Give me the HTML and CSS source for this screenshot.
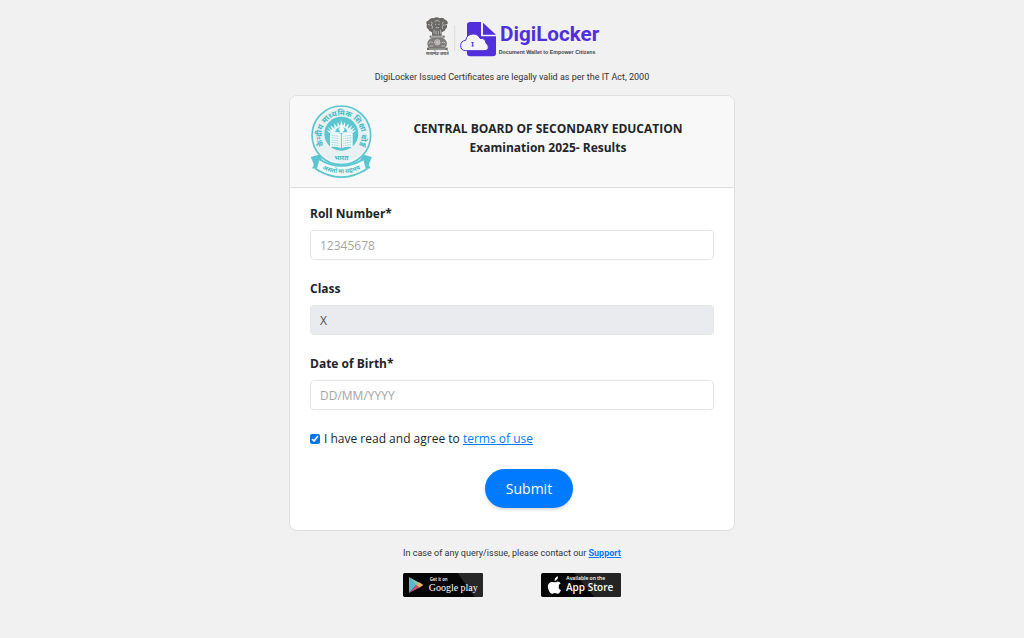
FILE: index.html
```html
<!DOCTYPE html>
<html lang="en">
<head>
<meta charset="utf-8">
<meta name="viewport" content="width=device-width, initial-scale=1">
<title>DigiLocker - CBSE Examination 2025 Results</title>
<link rel="stylesheet" href="styles.css">
</head>
<body>
<div class="page">
  <header class="brand">
    <svg class="brand-logo" viewBox="27 15 528 126" role="img" aria-label="DigiLocker">
      <!-- State emblem -->
      <g fill="#6b6966">
        <path d="M42 30q6-9 14-5q9-6 18 0q10-5 16 4q9 2 8 12l-3 3q4 8-3 13q-3 9-12 10v10h-29v-10q-9-1-11-9q-8-5-4-14q-7-8 6-14z"/>
        <path d="M44 77h45v6H44z"/>
        <path d="M51 83q-15 6-14 20q0 8 7 12h45q7-5 7-14q-1-12-13-18z" opacity=".85"/>
        <path d="M36 113h62v7H36z"/>
      </g>
      <g fill="none" stroke="#dedddb" stroke-width="2">
        <path d="M49 35q5 5 0 10q6 5 2 12M85 35q-5 5 0 10q-6 5-2 12M59 34q7-5 15 0M60 43h4m6 0h4M62 52q5 4 10 0M57 59v12M63 62v11M70 62v11M77 59v12M39 43l7 3M96 43l-8 3M48 80h37"/>
        <circle cx="67" cy="97" r="8"/>
        <path d="M67 89v16M59 97h16M61 91l12 12M73 91l-12 12M41 100q6-8 13-2M80 99q6-7 12 1M44 108h11M79 108h11M42 117h50"/>
      </g>
      <text class="motto" x="67" y="135" text-anchor="middle">सत्यमेव जयते</text>
      <path d="M119 45v79" stroke="#d2d2d2" stroke-width="2"/>
      <!-- Document and cloud -->
      <path fill="#5130db" d="M165 36h33v43h45v51q0 9-9 9h-69q-9 0-9-9V45q0-9 9-9z"/>
      <path fill="#5130db" d="M204 38l39 36h-39z"/>
      <path d="M152 122q-15 0-15-15q0-14 15-16q4-19 22-19q15 0 21 13q17-1 18 15q7 3 7 11q0 11-13 11z" fill="#f5f4fb" stroke="#5130db" stroke-width="3"/>
      <path d="M169 98h7M173 97v11M170 108h6" fill="none" stroke="#5130db" stroke-width="3"/>
      <text class="wordmark" x="255" y="94">DigiLocker</text>
      <text class="tagline" x="251" y="132">Document Wallet to Empower Citizens</text>
    </svg>
    <p class="note">DigiLocker Issued Certificates are legally valid as per the IT Act, 2000</p>
  </header>

  <main class="card">
    <div class="card-header">
      <svg class="seal" viewBox="30 22 186 219" role="img" aria-label="Central Board of Secondary Education seal">
        <defs>
          <path id="arc-top" d="M73 145A60 60 0 1 1 175 145"/>
          <path id="arc-bottom" d="M55 208Q124 246 193 208"/>
        </defs>
        <path fill="#5bc6d0" d="M32 178l25-7l20 29l-22 24l-5-10l-14-2q6-7 5-14zM216 178l-25-7l-20 29l22 24l5-10l14-2q-6-7-5-14z"/>
        <circle cx="124" cy="113" r="88" fill="#e9f0f2" stroke="#5bc6d0" stroke-width="5"/>
        <circle cx="124" cy="113" r="82" fill="none" stroke="#f8f8f8" stroke-width="3"/>
        <circle cx="124" cy="108" r="51" fill="#5bc6d0"/>
        <path fill="#e8f8fa" d="M88 105l-8-8l12 4l-9-13l14 9l-6-15l13 11l-2-16l10 12l1-17l7 14l4-18l4 18l7-14l1 17l10-12l-2 16l13-11l-6 15l14-9l-9 13l12-4l-8 8z"/>
        <path fill="#5bc6d0" d="M106 103q1-14 18-14t18 14z"/>
        <path fill="#fff" d="M115 94q5-1 6-5q2-8 7-9q-2 6 1 9q2 4 5 5q-2 8-9 8t-10-8zM121 101h7v6h-7z"/>
        <path fill="#f3fafa" d="M90 106q17-5 33 3v42q-16-6-33-3zM158 106q-17-5-33 3v42q16-6 33-3z"/>
        <path d="M95 113l23 3M95 120l23 3M95 127l23 3M95 134l23 3M95 141l23 3M153 113l-23 3M153 120l-23 3M153 127l-23 3M153 134l-23 3M153 141l-23 3" stroke="#9bd6dc" stroke-width="3" stroke-dasharray="5 2"/>
        <path d="M124 108v44" stroke="#5bc6d0" stroke-width="2"/>
        <circle cx="53" cy="140" r="3" fill="#5bc6d0"/>
        <circle cx="195" cy="140" r="3" fill="#5bc6d0"/>
        <text class="seal-ring"><textPath href="#arc-top" startOffset="50%" text-anchor="middle">केन्द्रीय माध्यमिक शिक्षा बोर्ड</textPath></text>
        <text class="seal-country" x="124" y="187" text-anchor="middle">भारत</text>
        <path fill="#f1fafa" stroke="#5bc6d0" stroke-width="5" d="M56 184q68 42 136 0l8 30q-76 49-152 0z"/>
        <text class="seal-motto"><textPath href="#arc-bottom" startOffset="50%" text-anchor="middle">असतो मा सद्गमय</textPath></text>
      </svg>
      <h1 class="title">CENTRAL BOARD OF SECONDARY EDUCATION<br>Examination 2025- Results</h1>
    </div>
    <form class="form">
      <div class="field">
        <label for="roll">Roll Number*</label>
        <input id="roll" class="control" type="text" placeholder="12345678">
      </div>
      <div class="field">
        <label for="class">Class</label>
        <input id="class" class="control" type="text" value="X" readonly>
      </div>
      <div class="field">
        <label for="dob">Date of Birth*</label>
        <input id="dob" class="control" type="text" placeholder="DD/MM/YYYY">
      </div>
      <div class="agree">
        <input id="agree" class="tick" type="checkbox" checked>
        <label for="agree">I have read and agree to <a href="#terms">terms of use</a></label>
      </div>
      <div class="actions"><button class="submit" type="submit">Submit</button></div>
    </form>
  </main>

  <footer class="footer">
    <p class="note">In case of any query/issue, please contact our <a class="support" href="#support">Support</a></p>
    <div class="stores">
      <a class="store" href="#google-play" aria-label="Get it on Google play">
        <svg viewBox="0 0 240 72">
          <rect width="240" height="72" rx="5" fill="#050505"/>
          <path d="M164 0h71q5 0 5 5v62q0 5-5 5h-20z" fill="#272727"/>
          <path d="M18 12l22 24l-22 24z" fill="#54b9d1"/>
          <path d="M18 12l31 17l-9 9z" fill="#8ac5b3"/>
          <path d="M49 28l12 8l-12 8l-9-8z" fill="#edb466"/>
          <path d="M18 60l31-16l-9-8z" fill="#d34e69"/>
          <text class="store-small" x="80" y="24">Get it on</text>
          <text class="google" x="77" y="53">Google play</text>
        </svg>
      </a>
      <a class="store" href="#app-store" aria-label="Available on the App Store">
        <svg viewBox="0 0 240 72">
          <rect width="240" height="72" rx="5" fill="#050505"/>
          <path d="M100 0h135q5 0 5 5v62q0 5-5 5h-75z" fill="#242424"/>
          <path fill="#fff" d="M41 24q-1-10 10-14q1 10-10 14zM40 28q4 0 8-2q7-1 11 5q-7 4-6 11q0 7 7 10q-5 12-11 10q-8-4-14 0q-7 2-12-11q-5-12 0-19q5-8 17-4z"/>
          <text class="store-small available" x="76" y="21">Available on the</text>
          <text class="apple" x="75" y="55">App Store</text>
        </svg>
      </a>
    </div>
  </footer>
</div>
</body>
</html>
```
FILE: styles.css
```css
* { box-sizing: border-box; }

body {
  margin: 0;
  background: #f1f1f1;
  color: #212529;
  font-family: "Open Sans", "Noto Sans", sans-serif;
  font-size: 12px;
  line-height: 20px;
}

p, h1 { margin: 0; }

a { color: #007bff; }

.page {
  display: flex;
  flex-direction: column;
  align-items: center;
  padding: 15px 16px 40px;
}

.brand {
  display: flex;
  flex-direction: column;
  align-items: center;
  gap: 14px;
}

.brand-logo { width: 176px; height: 42px; }

.wordmark {
  fill: #5130db;
  font: bold 62px Roboto, sans-serif;
}

.tagline { fill: #444; font: bold 16px "Liberation Sans", sans-serif; }

.motto { fill: #555; font: bold 13px "Noto Sans Devanagari", "Noto Sans", sans-serif; }

.note {
  color: #333;
  font-family: Roboto, "Noto Sans", sans-serif;
  font-size: 9px;
  line-height: 12px;
}

.card {
  width: 100%;
  max-width: 446px;
  margin-top: 12px;
  background: #fff;
  border: 1px solid #dfdfdf;
  border-radius: 8px;
  overflow: hidden;
}

.card-header {
  display: flex;
  align-items: flex-start;
  gap: 10px;
  padding: 9px 20px;
  background: #f8f8f8;
  border-bottom: 1px solid #dfdfdf;
}

.seal { flex: none; width: 62px; height: 73px; }

.seal-ring { fill: #42bbc6; font: bold 23px "Noto Sans Devanagari", "Noto Sans", sans-serif; }
.seal-country { fill: #42bbc6; font: bold 20px "Noto Sans Devanagari", "Noto Sans", sans-serif; }
.seal-motto { fill: #42bbc6; font: bold 18px "Noto Sans Devanagari", "Noto Sans", sans-serif; }

.title {
  flex: 1;
  padding-top: 14px;
  font-size: 12px;
  line-height: 19px;
  font-weight: 700;
  text-align: center;
}

.form { padding: 16px 20px 22px; }

.field {
  display: flex;
  flex-direction: column;
  gap: 6px;
  margin-bottom: 19px;
}

.field label { font-weight: 700; }

.control {
  width: 100%;
  height: 30px;
  padding: 0 9px;
  border: 1px solid #e4e6e8;
  border-radius: 4px;
  background: #fff;
  color: #495057;
  font: inherit;
}

.control::placeholder { color: #a5a5a5; opacity: 1; }
.control:read-only { background: #e9ebef; }

.agree { display: flex; align-items: center; gap: 4px; }

.tick { width: 10px; height: 10px; margin: 0; accent-color: #0075e8; }

.actions {
  display: flex;
  justify-content: center;
  margin-top: 20px;
  padding-left: 34px;
}

.submit {
  height: 39px;
  padding: 0 21px;
  border: 0;
  border-radius: 20px;
  background: #007bff;
  box-shadow: 0 2px 3px #00000026;
  color: #fff;
  font: inherit;
  font-size: 14px;
}

.footer {
  display: flex;
  flex-direction: column;
  align-items: center;
  gap: 14px;
  margin-top: 16px;
}

.support { font-weight: 700; }

.stores { display: flex; gap: 58px; }
.store { display: block; width: 80px; height: 24px; }
.store svg { display: block; width: 100%; height: 100%; }
.store text { fill: #fff; }
.store-small { font: 600 13px "Open Sans", sans-serif; }
.available { font-size: 15px; }
.google { font: 30px "Liberation Serif", serif; }
.apple { font: 600 30px "Open Sans", sans-serif; }
```
